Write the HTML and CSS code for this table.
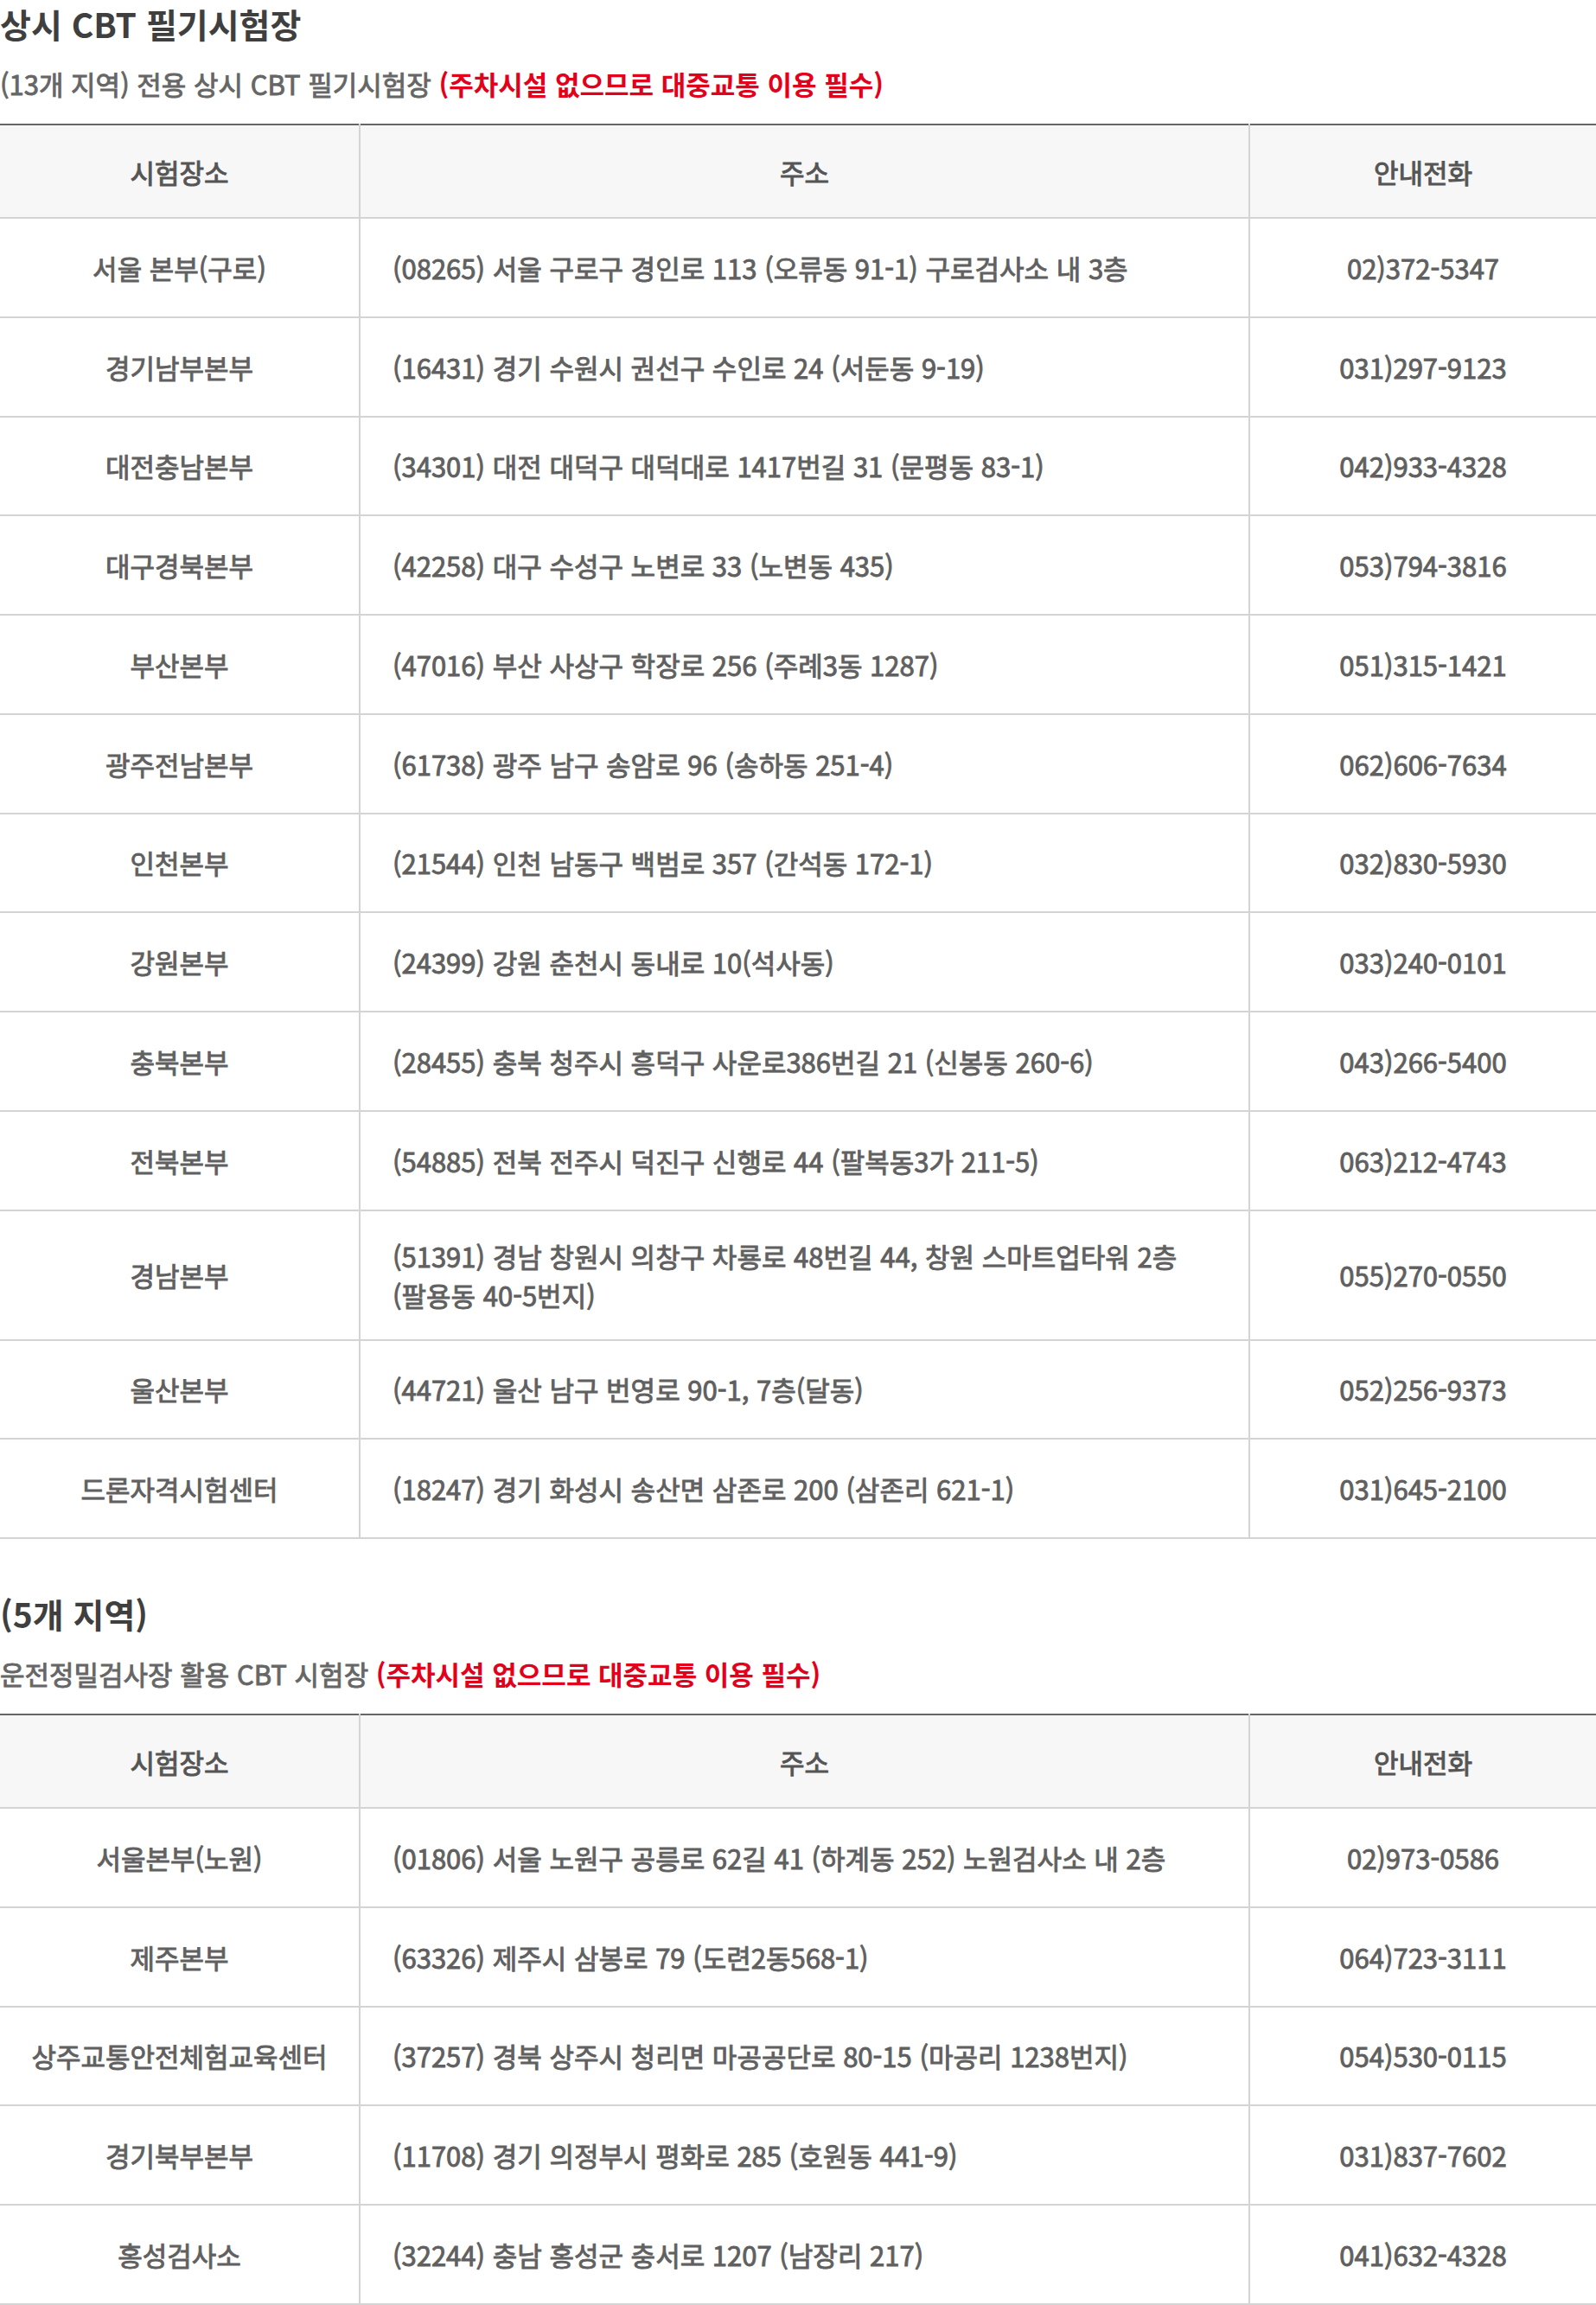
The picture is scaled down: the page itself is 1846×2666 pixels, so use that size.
FILE: index.html
```html
<!DOCTYPE html>
<html lang="ko">
<head>
<meta charset="utf-8">
<title>상시 CBT 필기시험장</title>
<link rel="stylesheet" href="styles.css">
</head>
<body>
<section class="sec">
  <h2 class="sec-title first">상시 CBT 필기시험장</h2>
  <p class="sec-sub">(13개 지역) 전용 상시 CBT 필기시험장 <span class="warn">(주차시설 없으므로 대중교통 이용 필수)</span></p>
  <table class="tbl">
    <colgroup><col class="c1"><col class="c2"><col class="c3"></colgroup>
    <thead>
      <tr><th>시험장소</th><th>주소</th><th>안내전화</th></tr>
    </thead>
    <tbody>
      <tr><td>서울 본부(구로)</td><td class="addr">(08265) 서울 구로구 경인로 113 (오류동 91-1) 구로검사소 내 3층</td><td>02)372-5347</td></tr>
      <tr><td>경기남부본부</td><td class="addr">(16431) 경기 수원시 권선구 수인로 24 (서둔동 9-19)</td><td>031)297-9123</td></tr>
      <tr><td>대전충남본부</td><td class="addr">(34301) 대전 대덕구 대덕대로 1417번길 31 (문평동 83-1)</td><td>042)933-4328</td></tr>
      <tr><td>대구경북본부</td><td class="addr">(42258) 대구 수성구 노변로 33 (노변동 435)</td><td>053)794-3816</td></tr>
      <tr><td>부산본부</td><td class="addr">(47016) 부산 사상구 학장로 256 (주례3동 1287)</td><td>051)315-1421</td></tr>
      <tr><td>광주전남본부</td><td class="addr">(61738) 광주 남구 송암로 96 (송하동 251-4)</td><td>062)606-7634</td></tr>
      <tr><td>인천본부</td><td class="addr">(21544) 인천 남동구 백범로 357 (간석동 172-1)</td><td>032)830-5930</td></tr>
      <tr><td>강원본부</td><td class="addr">(24399) 강원 춘천시 동내로 10(석사동)</td><td>033)240-0101</td></tr>
      <tr><td>충북본부</td><td class="addr">(28455) 충북 청주시 흥덕구 사운로386번길 21 (신봉동 260-6)</td><td>043)266-5400</td></tr>
      <tr><td>전북본부</td><td class="addr">(54885) 전북 전주시 덕진구 신행로 44 (팔복동3가 211-5)</td><td>063)212-4743</td></tr>
      <tr><td>경남본부</td><td class="addr">(51391) 경남 창원시 의창구 차룡로 48번길 44, 창원 스마트업타워 2층<br>(팔용동 40-5번지)</td><td>055)270-0550</td></tr>
      <tr><td>울산본부</td><td class="addr">(44721) 울산 남구 번영로 90-1, 7층(달동)</td><td>052)256-9373</td></tr>
      <tr><td>드론자격시험센터</td><td class="addr">(18247) 경기 화성시 송산면 삼존로 200 (삼존리 621-1)</td><td>031)645-2100</td></tr>
    </tbody>
  </table>
</section>
<section class="sec">
  <h2 class="sec-title">(5개 지역)</h2>
  <p class="sec-sub">운전정밀검사장 활용 CBT 시험장 <span class="warn">(주차시설 없으므로 대중교통 이용 필수)</span></p>
  <table class="tbl">
    <colgroup><col class="c1"><col class="c2"><col class="c3"></colgroup>
    <thead>
      <tr><th>시험장소</th><th>주소</th><th>안내전화</th></tr>
    </thead>
    <tbody>
      <tr><td>서울본부(노원)</td><td class="addr">(01806) 서울 노원구 공릉로 62길 41 (하계동 252) 노원검사소 내 2층</td><td>02)973-0586</td></tr>
      <tr><td>제주본부</td><td class="addr">(63326) 제주시 삼봉로 79 (도련2동568-1)</td><td>064)723-3111</td></tr>
      <tr><td>상주교통안전체험교육센터</td><td class="addr">(37257) 경북 상주시 청리면 마공공단로 80-15 (마공리 1238번지)</td><td>054)530-0115</td></tr>
      <tr><td>경기북부본부</td><td class="addr">(11708) 경기 의정부시 평화로 285 (호원동 441-9)</td><td>031)837-7602</td></tr>
      <tr><td>홍성검사소</td><td class="addr">(32244) 충남 홍성군 충서로 1207 (남장리 217)</td><td>041)632-4328</td></tr>
    </tbody>
  </table>
</section>
</body>
</html>
```

FILE: styles.css
```css
html, body {
  margin: 0;
  padding: 0;
  background: #ffffff;
}
body {
  font-family: "Noto Sans CJK KR", "Noto Sans", sans-serif;
  color: #666666;
}
.sec + .sec {
  margin-top: 57px;
}
.sec-title {
  margin: 0;
  font-size: 39px;
  line-height: 58px;
  font-weight: 700;
  color: #3f3f3f;
}
.sec-title.first {
  margin-top: -2px;
}
.sec-sub {
  margin: 18px 0 0;
  font-size: 31px;
  line-height: 45px;
  font-weight: 400;
  color: #666666;
  -webkit-text-stroke: 0.9px #666666;
}
.warn {
  color: #e2001a;
  font-weight: 700;
  -webkit-text-stroke: 0;
}
.tbl {
  margin-top: 24px;
  width: 100%;
  border-collapse: collapse;
  table-layout: fixed;
  border-top: 2px solid #666666;
  font-size: 31px;
  line-height: 45px;
}
.c1 { width: 416px; }
.c3 { width: 401px; }
.tbl thead tr {
  height: 108px;
}
.tbl tbody tr {
  height: 114.75px;
}
.tbl th {
  background: #f7f7f7;
  color: #555555;
  font-weight: 400;
  -webkit-text-stroke: 1px #555555;
  padding: 0;
  border-bottom: 2px solid #d4d4d4;
  border-left: 2px solid #d4d4d4;
  vertical-align: middle;
}
.tbl td {
  padding: 29px 20px;
  text-align: center;
  vertical-align: middle;
  font-weight: 400;
  color: #606060;
  -webkit-text-stroke: 0.9px #606060;
  border-bottom: 2px solid #d4d4d4;
  border-left: 2px solid #d4d4d4;
}
.tbl th:first-child,
.tbl td:first-child {
  border-left: none;
}
.tbl td.addr {
  text-align: left;
  padding-left: 37px;
}
```
